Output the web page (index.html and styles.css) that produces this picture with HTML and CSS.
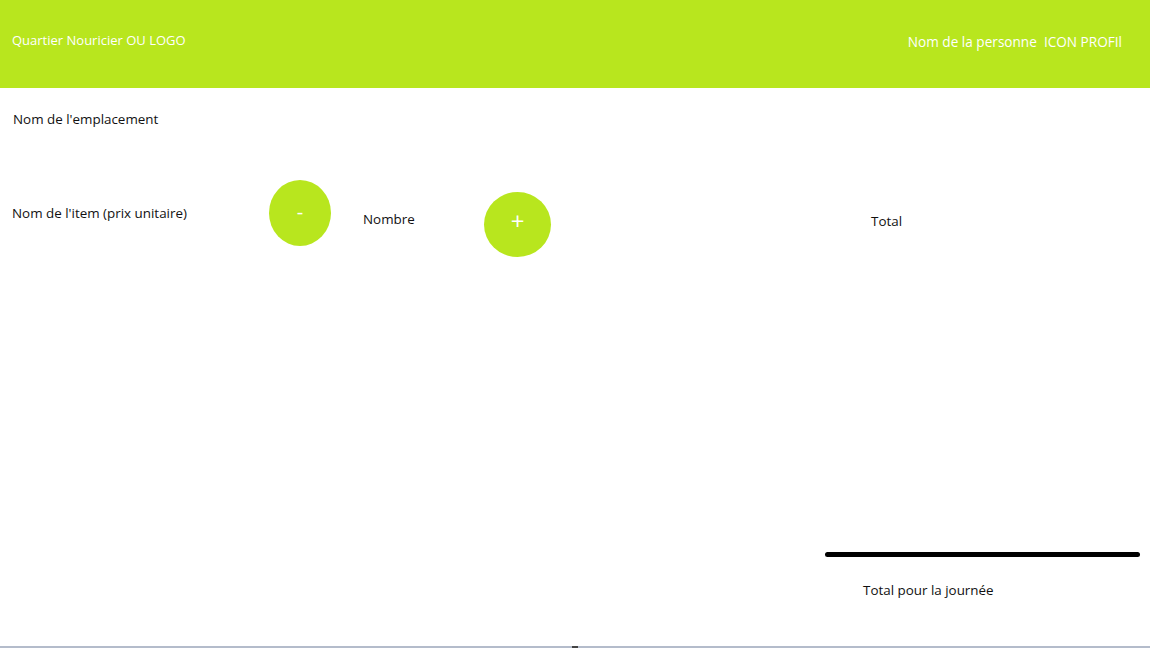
FILE: index.html
```html
<!DOCTYPE html>
<html lang="fr">
<head>
<meta charset="utf-8">
<title>Quartier Nouricier</title>
<link rel="stylesheet" href="styles.css">
</head>
<body>
<div class="page">
  <header class="topbar">
    <div class="brand">Quartier Nouricier OU LOGO</div>
    <div class="user">Nom de la personne&nbsp;&nbsp;ICON PROFIl</div>
  </header>
  <main class="content">
    <div class="location">Nom de l'emplacement</div>
    <div class="item-row">
      <div class="item-name">Nom de l'item (prix unitaire)</div>
      <button class="circle minus">-</button>
      <div class="count">Nombre</div>
      <button class="circle plus">+</button>
      <div class="total">Total</div>
    </div>
    <div class="summary">
      <div class="rule"></div>
      <div class="day-total">Total pour la journée</div>
    </div>
  </main>
  <div class="bottom-edge"><span class="mark"></span></div>
</div>
</body>
</html>
```
FILE: styles.css
```css
* { box-sizing: border-box; }
html, body { margin: 0; padding: 0; background: #ffffff; }
body {
  font-family: "Open Sans", "Noto Sans", "Liberation Sans", sans-serif;
  font-size: 13.4px;
  color: #111111;
}
.page {
  width: 1150px;
  height: 648px;
  display: flex;
  flex-direction: column;
}
.topbar {
  height: 88px;
  background: #b8e61e;
  color: #ffffff;
  display: flex;
  justify-content: space-between;
  align-items: flex-start;
  padding: 31px 28px 0 12px;
  flex-shrink: 0;
}
.brand { line-height: 18px; font-size: 13px; }
.user { line-height: 18px; padding-top: 2px; font-size: 13.6px; }
.content {
  flex: 1;
  display: flex;
  flex-direction: column;
  padding-top: 22px;
}
.location {
  line-height: 18px;
  padding-left: 13px;
}
.item-row {
  display: flex;
  align-items: flex-start;
  margin-top: 52px;
}
.item-name {
  width: 269px;
  padding-left: 12px;
  margin-top: 24px;
  line-height: 18px;
}
.circle {
  border: none;
  padding: 0;
  margin: 0;
  background: #b8e61e;
  color: #ffffff;
  border-radius: 50%;
  font-family: inherit;
  font-size: 20px;
  display: flex;
  align-items: center;
  justify-content: center;
}
.minus {
  width: 62px;
  height: 66px;
  padding-bottom: 4px;
}
.count {
  width: 153px;
  padding-left: 32px;
  margin-top: 30px;
  line-height: 18px;
}
.plus {
  width: 67px;
  height: 65px;
  margin-top: 12px;
  padding-bottom: 8px;
  font-size: 24px;
}
.total {
  margin-left: 320px;
  margin-top: 32px;
  line-height: 18px;
}
.summary {
  margin-top: auto;
  margin-left: 825px;
  width: 315px;
  padding-bottom: 47px;
}
.rule {
  height: 5px;
  background: #000000;
  border-radius: 3px;
}
.day-total {
  margin-top: 24px;
  padding-left: 38px;
  line-height: 18px;
}
.bottom-edge {
  height: 2px;
  background: #b4bccb;
  position: relative;
  flex-shrink: 0;
}
.mark {
  position: absolute;
  left: 572px;
  top: 0;
  width: 6px;
  height: 2px;
  background: #444444;
}
```
